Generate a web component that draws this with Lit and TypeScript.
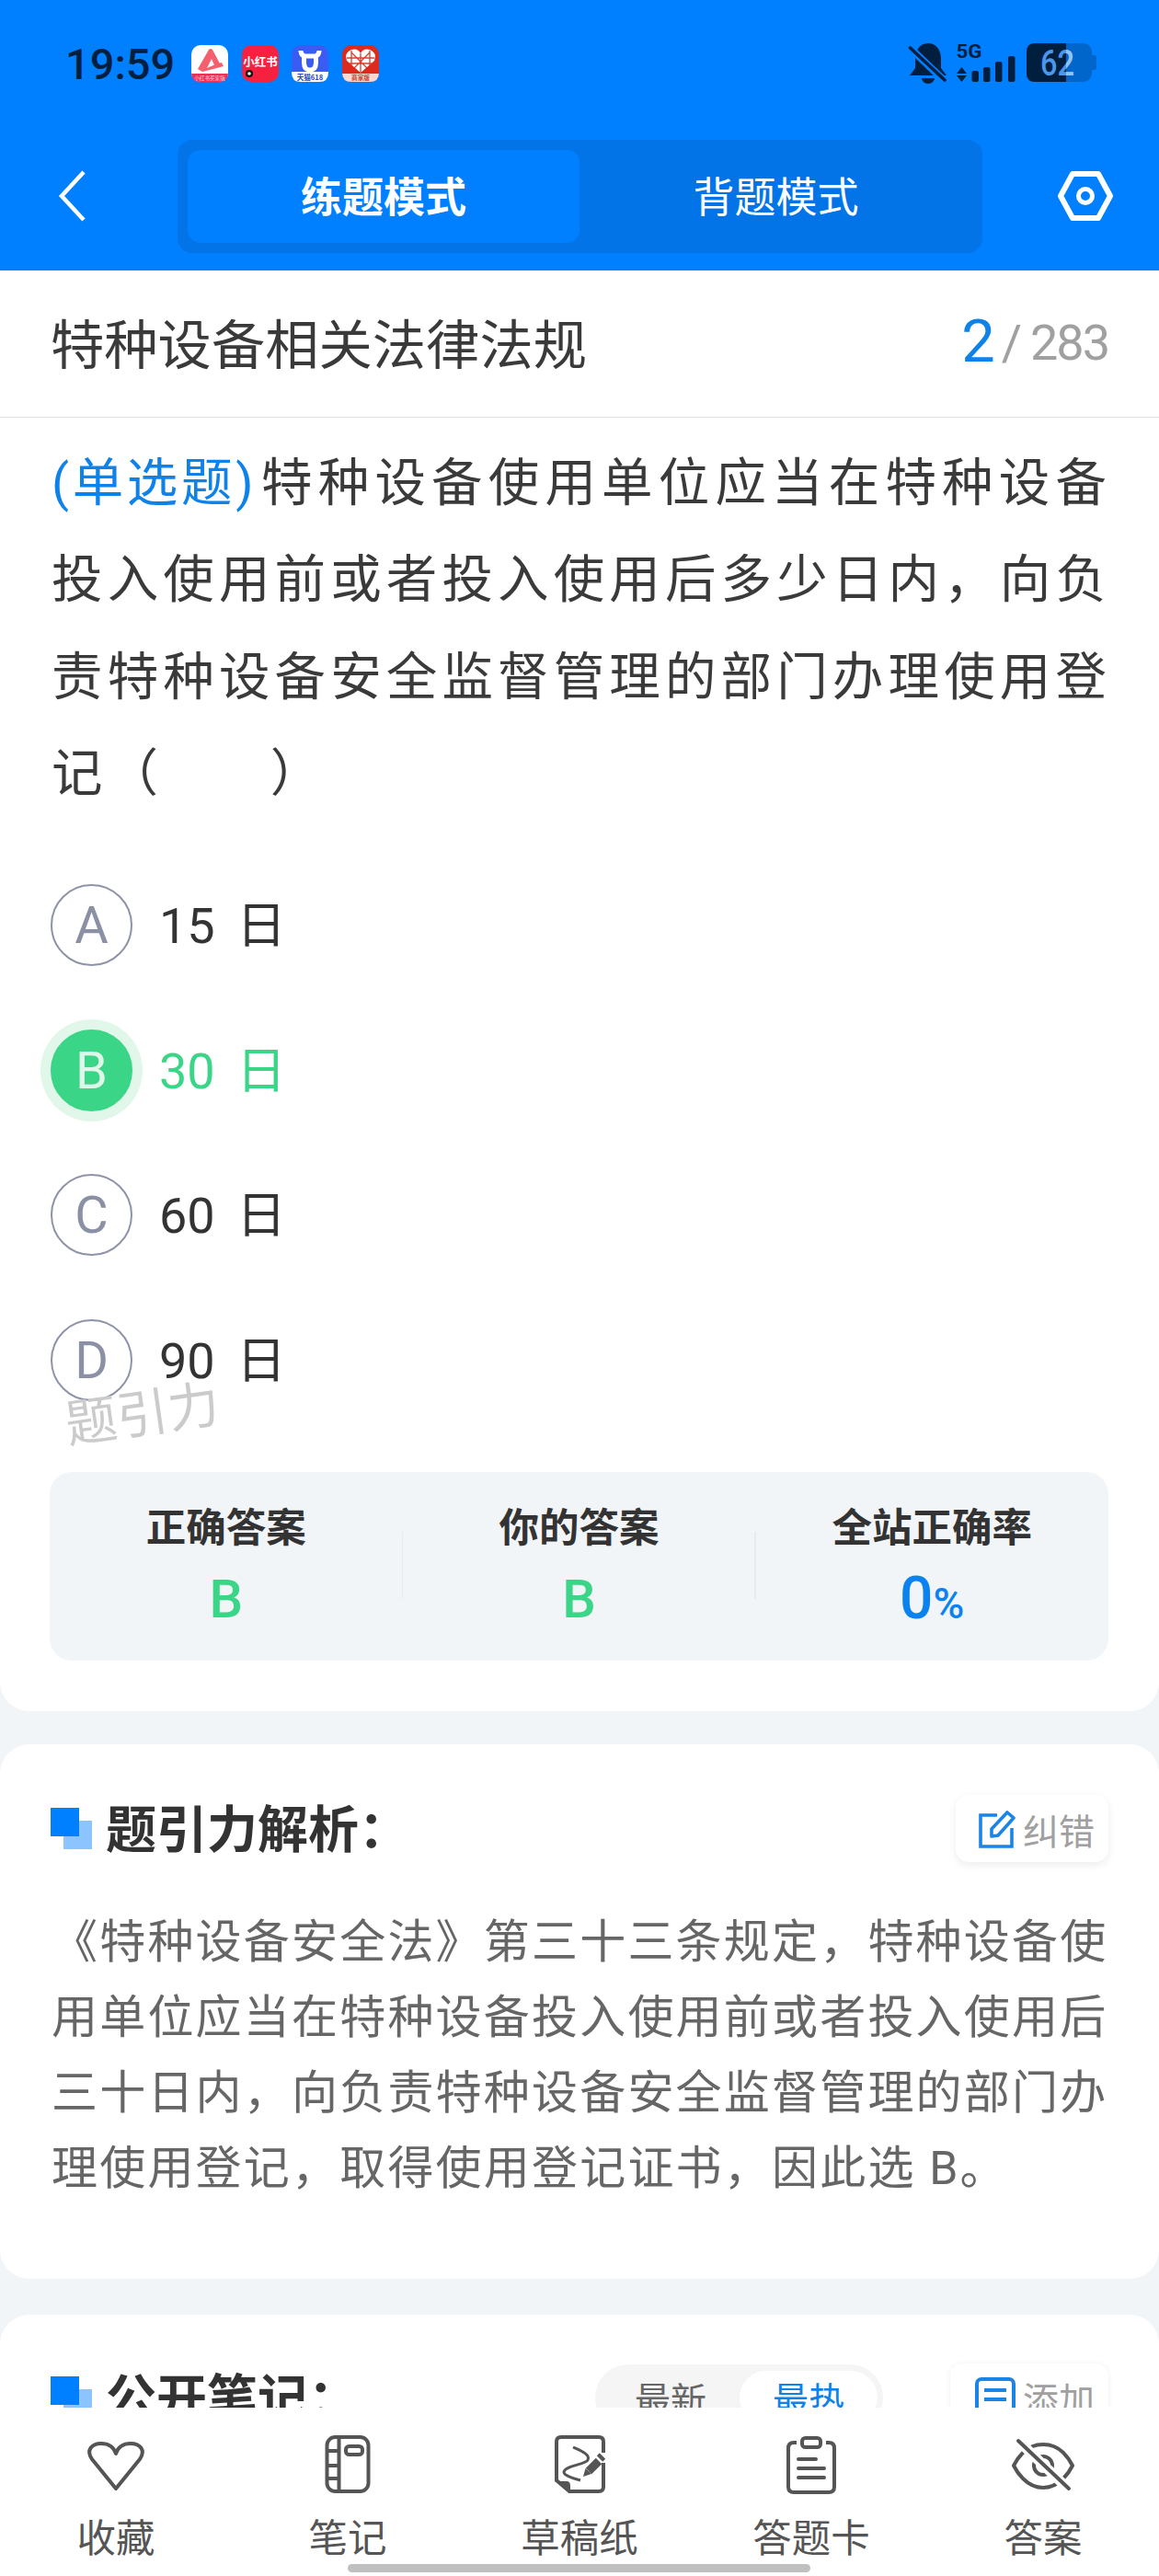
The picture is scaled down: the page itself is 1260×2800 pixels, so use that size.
import { LitElement, html, css, svg } from "lit";
import { customElement } from "lit/decorators.js";

const dark = "#001f3f";

const appIcons = html`
  <svg class="app" viewBox="0 0 40 40">
    <rect width="40" height="40" rx="10" fill="#fff"/>
    <path d="M0 31H40V30Q40 40 30 40H10Q0 40 0 30Z" fill="#ef2f55"/>
    <path d="M7 26 L19 5 Q21 3 23 5 L32 22 L26 24 L22 15 L17 25 Q28 20 33 19 L35 23 Q24 26 12 29 Z" fill="#f4606e"/>
    <text x="20" y="38" text-anchor="middle" font-size="5.6" fill="#ffd4dc" font-family="'Noto Sans CJK SC',sans-serif">小红书买家版</text>
  </svg>
  <svg class="app" viewBox="0 0 40 40">
    <rect width="40" height="40" rx="10" fill="#f5213f"/>
    <text x="20" y="23" text-anchor="middle" font-size="12.5" font-weight="700" fill="#fff" font-family="'Noto Sans CJK SC',sans-serif">小红书</text>
    <circle cx="8" cy="31" r="4" fill="#16080c"/>
    <circle cx="8" cy="31" r="1.8" fill="#fff"/>
  </svg>
  <svg class="app" viewBox="0 0 40 40">
    <rect width="40" height="40" rx="10" fill="#3a5cf2"/>
    <path d="M0 29H40V30Q40 40 30 40H10Q0 40 0 30Z" fill="#fff"/>
    <path d="M10 6 Q10 11 14 12 H26 Q30 11 30 6 M13.5 12 V19 Q13.5 27 20 27 Q26.5 27 26.5 19 V12" fill="none" stroke="#fff" stroke-width="5"/>
    <text x="20" y="38" text-anchor="middle" font-size="7.6" font-weight="700" fill="#2a45c8" font-family="'Noto Sans CJK SC',sans-serif">天猫618</text>
  </svg>
  <svg class="app" viewBox="0 0 40 40">
    <rect width="40" height="40" rx="10" fill="#dc2b1c"/>
    <path d="M0 31H40V30Q40 40 30 40H10Q0 40 0 30Z" fill="#fbd9d2"/>
    <path d="M20 30 L5 17 Q2 8 10 5 Q17 3 20 9 Q23 3 30 5 Q38 8 35 17 Z" fill="#fff"/>
    <path d="M20 9V30M10 6V22M30 6V22M5 14H35M8 20H32M13 25L30 8M27 25L10 8" stroke="#d8402f" stroke-width="1.3" fill="none"/>
    <text x="20" y="38" text-anchor="middle" font-size="6.6" font-weight="700" fill="#c9402e" font-family="'Noto Sans CJK SC',sans-serif">商家版</text>
  </svg>
`;

const sysIcons = html`
  <svg class="sys" viewBox="0 0 210 50" width="210" height="50">
    <defs>
      <clipPath id="battEmpty"><rect x="174" y="0" width="36" height="50"/></clipPath>
    </defs>
    <path d="M24 3 C14 3 10 12 10 20 L10 30 L4 38 H44 L38 30 V20 C38 12 34 3 24 3 Z" fill="${dark}"/>
    <path d="M17 41 a7 6 0 0 0 14 0 Z" fill="${dark}"/>
    <path d="M2 6 L42 44" stroke="#0080ff" stroke-width="8"/>
    <path d="M4.5 8 L42 43" stroke="${dark}" stroke-width="3.6" stroke-linecap="round"/>
    <text x="54.5" y="19" font-size="21" font-weight="700" fill="${dark}" font-family="Roboto,sans-serif" textLength="28" lengthAdjust="spacingAndGlyphs">5G</text>
    <path d="M60.5 29 L66 36 H55 Z M60.5 45 L66 38 H55 Z" fill="${dark}"/>
    <rect x="71.5" y="33" width="7.5" height="12" rx="2" fill="${dark}"/>
    <rect x="84" y="29" width="7.5" height="16" rx="2" fill="${dark}"/>
    <rect x="97" y="23" width="7.5" height="22" rx="2" fill="${dark}"/>
    <rect x="111" y="17" width="7.5" height="28" rx="2" fill="${dark}"/>
    <rect x="131" y="3" width="71" height="42" rx="9" fill="#0166cc"/>
    <path d="M202 16 h3 q2 0 2 2 v12 q0 2 -2 2 h-3 Z" fill="#0166cc"/>
    <path d="M140 3 H174 V45 H140 Q131 45 131 36 V12 Q131 3 140 3 Z" fill="${dark}"/>
    <text x="146" y="38" font-size="39" font-weight="500" fill="#4a97ec" font-family="Roboto,sans-serif" textLength="37" lengthAdjust="spacingAndGlyphs">62</text>
    <text x="146" y="38" font-size="39" font-weight="500" fill="#8cc4f8" font-family="Roboto,sans-serif" textLength="37" lengthAdjust="spacingAndGlyphs" clip-path="url(#battEmpty)" aria-hidden="true">62</text>
  </svg>
`;

const mark = html`
  <svg class="mark" viewBox="0 0 45 45" width="45" height="45">
    <rect x="14" y="14" width="31" height="31" fill="#8cc4ff"/>
    <rect x="0" y="0" width="31" height="31" fill="#0080ff"/>
  </svg>
`;

const navIcons = [
  svg`<path d="M38 59 L12 27 C5 17 12 10 22 10 C30 10 36 14 38 21 C40 14 46 10 54 10 C64 10 71 17 64 27 Z" stroke-linejoin="round"/>`,
  svg`<rect x="15.5" y="3" width="45" height="59" rx="9"/><path d="M28.5 3V62M15.5 18H28.5M15.5 34H28.5M15.5 48H28.5"/><rect x="36" y="13" width="18" height="9" rx="3.5"/>`,
  svg`<path d="M64 20 V8 Q64 3 59 3 H18 Q13 3 13 8 V50 L27 62 H59 Q64 62 64 57 V31"/>
      <path d="M13 51 H24 Q28 51 28 56 V62 Z" class="fill"/>
      <path d="M31 14 C40 18 50 22 47 28 C44 33 22 34 21 41 C21 45 32 48 39 50" stroke-width="3"/>
      <path d="M42 46 L44.5 37 L51 43 Z" class="fill"/>
      <path d="M48 40 L59 29" stroke-width="9"/>
      <path d="M60 26.5 L63 23.5" stroke-width="9"/>`,
  svg`<path d="M22 9 H19 Q13 9 13 15 V57 Q13 63 19 63 H57 Q63 63 63 57 V15 Q63 9 57 9 H54"/>
      <rect x="28" y="4" width="20" height="10" rx="3.5"/>
      <path d="M24 27H43M24 37H52M24 47H52" stroke-linecap="round"/>`,
  svg`<path d="M6 34 C9 28 11 25 16 20 C23 13 30 11 38 11 C46 11 53 13 60 20 C65 25 67 28 70 34 C67 40 65 43 60 48 C53 55 46 58 38 58 C30 58 23 55 16 48 C11 43 9 40 6 34 Z" stroke-linejoin="round"/>
      <circle cx="38" cy="34" r="10"/>
      <path d="M8 4 L68 62" stroke="#fff" stroke-width="11"/>
      <path d="M11 7 L66 59" stroke-linecap="round"/>`,
];

const navItems = ["收藏", "笔记", "草稿纸", "答题卡", "答案"];

const options = [
  { k: "A", t: "15 日", on: false },
  { k: "B", t: "30 日", on: true },
  { k: "C", t: "60 日", on: false },
  { k: "D", t: "90 日", on: false },
];

@customElement("app-root")
export class AppRoot extends LitElement {
  static styles = css`
    :host {
      display: flex;
      flex-direction: column;
      height: 2800px;
      width: 1260px;
      overflow: hidden;
      background: #f2f5f8;
      font-family: Roboto, "Noto Sans CJK SC", sans-serif;
      color: #333;
    }
    .top { background: #0080ff; height: 294px; flex: none; }
    .status {
      height: 138px;
      display: flex;
      align-items: center;
      padding: 0 65px 0 71px;
    }
    .time { font-size: 47px; font-weight: 500; color: #001f3f; width: 117px; line-height: 1; margin-right: 20px; white-space: nowrap; }
    .apps { display: flex; gap: 14.7px; }
    .app { width: 40px; height: 40px; display: block; }
    .sys { margin-left: auto; display: block; }
    .navrow {
      margin-top: 14px;
      height: 123px;
      display: grid;
      grid-template-columns: 193px 875px 192px;
      align-items: center;
    }
    .back { margin-left: 60px; display: block; margin-top: -2px; }
    .seg {
      height: 123px;
      box-sizing: border-box;
      background: #0274e8;
      border-radius: 16px;
      padding: 11px;
      display: grid;
      grid-template-columns: 426px 427px;
    }
    .seg div {
      display: flex;
      align-items: center;
      justify-content: center;
      font-size: 45px;
      color: #fff;
      border-radius: 14px;
      padding-bottom: 4px;
      box-sizing: border-box;
    }
    .seg .active { background: #0080ff; font-weight: 700; }
    .gear { justify-self: center; display: block; margin-left: 32px; margin-top: -2px; }

    .main { flex: 1; min-height: 0; overflow: hidden; }
    .card { background: #fff; position: relative; }
    .first { border-radius: 0 0 32px 32px; padding-bottom: 55px; }
    .titlebar {
      height: 159px;
      border-bottom: 1.5px solid #e2e2e2;
      display: flex;
      align-items: center;
      justify-content: space-between;
      padding: 0 55px 0 57px;
    }
    .title { font-size: 58.3px; color: #3a3a3a; margin-top: -6px; margin-left: -2px; }
    .count { display: flex; align-items: center; color: #a0a0a0; font-size: 54px; letter-spacing: -2px; margin-top: -3px; }
    .count b { font-weight: 400; font-size: 65px; color: #0f82ea; margin-right: 7px; letter-spacing: 0; margin-top: -2px; }
    .count i { font-style: normal; font-size: 54px; margin-right: 9px; letter-spacing: 0; }
    .q {
      margin: 0;
      padding: 19px 0 0 56px;
      width: 1152px;
      font-size: 55.5px;
      line-height: 105.4px;
      letter-spacing: 5.1px;
      color: #3a3a3a;
      text-align: justify;
    }
    .q span { color: #0f82ea; letter-spacing: 2.6px; margin-right: 5px; }
    .opts { margin-top: 32px; }
    .opt { height: 157.7px; display: flex; align-items: center; padding-left: 55px; font-size: 54px; }
    .dot {
      width: 89px;
      height: 89px;
      box-sizing: border-box;
      border-radius: 50%;
      border: 2.5px solid #8e93a8;
      color: #8b90a5;
      display: flex;
      align-items: center;
      justify-content: center;
      margin-right: 29px;
      flex: none;
      font-size: 56px;
      padding-top: 1px;
    }
    .opt.on .dot { background: #3ad587; border-color: #3ad587; color: #dff7ea; box-shadow: 0 0 0 11px #e0f7ea; }
    .optt { word-spacing: 10px; color: #333; margin-top: -8px; }
    .opt.on .optt { color: #3ad587; }
    .wm {
      position: absolute;
      left: 70px;
      top: 1198px;
      font-size: 56px;
      color: #cbcbcb;
      transform: rotate(-8deg);
      white-space: nowrap;
    }
    .ans {
      margin: 43px 55px 0 54px;
      height: 205px;
      background: #f2f5f8;
      border-radius: 24px;
      display: grid;
      grid-template-columns: repeat(3, 1fr);
      position: relative;
    }
    .col { text-align: center; position: relative; padding-top: 32px; }
    .col + .col::before {
      content: "";
      position: absolute;
      left: -1px;
      top: 65px;
      height: 73px;
      width: 1.5px;
      background: #e8ebee;
    }
    .lbl { font-size: 43.5px; font-weight: 700; line-height: 60px; color: #333; }
    .val { font-size: 58px; font-weight: 500; line-height: 66px; margin-top: 13px; color: #3ad587; }
    .val.blue { color: #0a82f0; font-size: 64px; font-weight: 500; }
    .val small { font-size: 46px; }

    .sec { margin-top: 36px; border-radius: 32px; padding: 55px 55px 79px; }
    .sec.third { margin-top: 39px; padding-top: 53px; }
    .head { display: flex; align-items: center; height: 73px; }
    .mark { display: block; margin-right: 15px; flex: none; }
    .head h2 { margin: 0; font-size: 55px; font-weight: 700; color: #333; line-height: 73px; white-space: nowrap; padding-top: 3px; }
    .btn {
      margin-left: auto;
      height: 73px;
      display: flex;
      align-items: center;
      padding: 0 15px 0 25px;
      border-radius: 14px;
      background: #fff;
      box-shadow: 0 3px 10px rgba(0, 0, 0, 0.08);
      color: #a0a0a0;
      font-size: 39px;
      white-space: nowrap;
    }
    .btn svg { display: block; margin-right: 8px; }
    .third .btn { padding-left: 27px; margin-left: 73px; box-shadow: 0 0 6px rgba(0, 0, 0, 0.06); }
    .tog {
      margin-left: auto;
      height: 72px;
      box-sizing: border-box;
      padding: 7px 6px 7px 7px;
      background: #f5f5f5;
      border-radius: 36px;
      display: flex;
      font-size: 39px;
      color: #666;
    }
    .tog div { width: 150px; display: flex; align-items: center; justify-content: center; border-radius: 30px; }
    .tog .active { background: #fff; color: #0f82ea; }
    .exp {
      margin: 46px 0 0 1px;
      width: 1153px;
      font-size: 50px;
      line-height: 82px;
      letter-spacing: 2.2px;
      color: #666;
    }

    .bottom {
      flex: none;
      height: 183px;
      background: #fff;
      display: grid;
      grid-template-columns: repeat(5, 252px);
      position: relative;
    }
    .item { display: flex; flex-direction: column; align-items: center; padding-top: 29px; color: #555; }
    .item svg { display: block; fill: none; stroke: #555; stroke-width: 4; }
    .item svg .fill { fill: #555; stroke: none; }
    .item span { font-size: 42.5px; line-height: 50px; margin-top: 23px; white-space: nowrap; }
    .home {
      position: absolute;
      left: 378px;
      width: 503px;
      bottom: 4px;
      height: 9px;
      border-radius: 5px;
      background: #c0c0c0;
    }
  `;

  render() {
    return html`
      <div class="top">
        <div class="status">
          <div class="time">19:59</div>
          <div class="apps">${appIcons}</div>
          ${sysIcons}
        </div>
        <div class="navrow">
          <svg class="back" width="40" height="60" viewBox="0 0 40 60" fill="none" stroke="#fff" stroke-width="4.5">
            <path d="M31 4 L7 30 L31 56"/>
          </svg>
          <div class="seg"><div class="active">练题模式</div><div>背题模式</div></div>
          <svg class="gear" width="66" height="60" viewBox="0 0 66 60" fill="none" stroke="#fff" stroke-width="6" stroke-linejoin="round">
            <path d="M6 30 L19 6 H47 L60 30 L47 54 H19 Z"/>
            <circle cx="33" cy="30" r="7.5" stroke-width="5"/>
          </svg>
        </div>
      </div>
      <div class="main">
        <div class="card first">
          <div class="titlebar">
            <div class="title">特种设备相关法律法规</div>
            <div class="count"><b>2</b><i>/</i>283</div>
          </div>
          <p class="q"><span>(单选题)</span>特种设备使用单位应当在特种设备投入使用前或者投入使用后多少日内，向负责特种设备安全监督管理的部门办理使用登记（&ensp;&ensp;&ensp;&thinsp;）</p>
          <div class="opts">
            ${options.map(
              (o) => html`<div class="opt ${o.on ? "on" : ""}">
                <div class="dot">${o.k}</div>
                <div class="optt">${o.t}</div>
              </div>`
            )}
          </div>
          <div class="wm">题引力</div>
          <div class="ans">
            <div class="col"><div class="lbl">正确答案</div><div class="val">B</div></div>
            <div class="col"><div class="lbl">你的答案</div><div class="val">B</div></div>
            <div class="col"><div class="lbl">全站正确率</div><div class="val blue">0<small>%</small></div></div>
          </div>
        </div>
        <div class="card sec">
          <div class="head">
            ${mark}
            <h2>题引力解析：</h2>
            <div class="btn">
              <svg width="40" height="42" viewBox="0 0 40 42" fill="none" stroke="#1a85e6" stroke-width="3.6">
                <path d="M20 6 H2 V40 H36 V20"/>
                <path d="M14 29 V21 L31 3 L38 9 L21 28 Z" stroke-linejoin="round"/>
              </svg>
              纠错
            </div>
          </div>
          <p class="exp">《特种设备安全法》第三十三条规定，特种设备使用单位应当在特种设备投入使用前或者投入使用后三十日内，向负责特种设备安全监督管理的部门办理使用登记，取得使用登记证书，因此选 B。</p>
        </div>
        <div class="card sec third">
          <div class="head">
            ${mark}
            <h2>公开笔记：</h2>
            <div class="tog"><div>最新</div><div class="active">最热</div></div>
            <div class="btn">
              <svg width="44" height="44" viewBox="0 0 44 44" fill="none" stroke="#1a85e6" stroke-width="4">
                <rect x="2" y="2" width="40" height="40" rx="5"/>
                <path d="M10 14H34M10 24H34"/>
              </svg>
              添加
            </div>
          </div>
        </div>
      </div>
      <div class="bottom">
        ${navItems.map(
          (t, i) => html`<div class="item">
            <svg width="76" height="66" viewBox="0 0 76 66">${navIcons[i]}</svg>
            <span>${t}</span>
          </div>`
        )}
        <div class="home"></div>
      </div>
    `;
  }
}
